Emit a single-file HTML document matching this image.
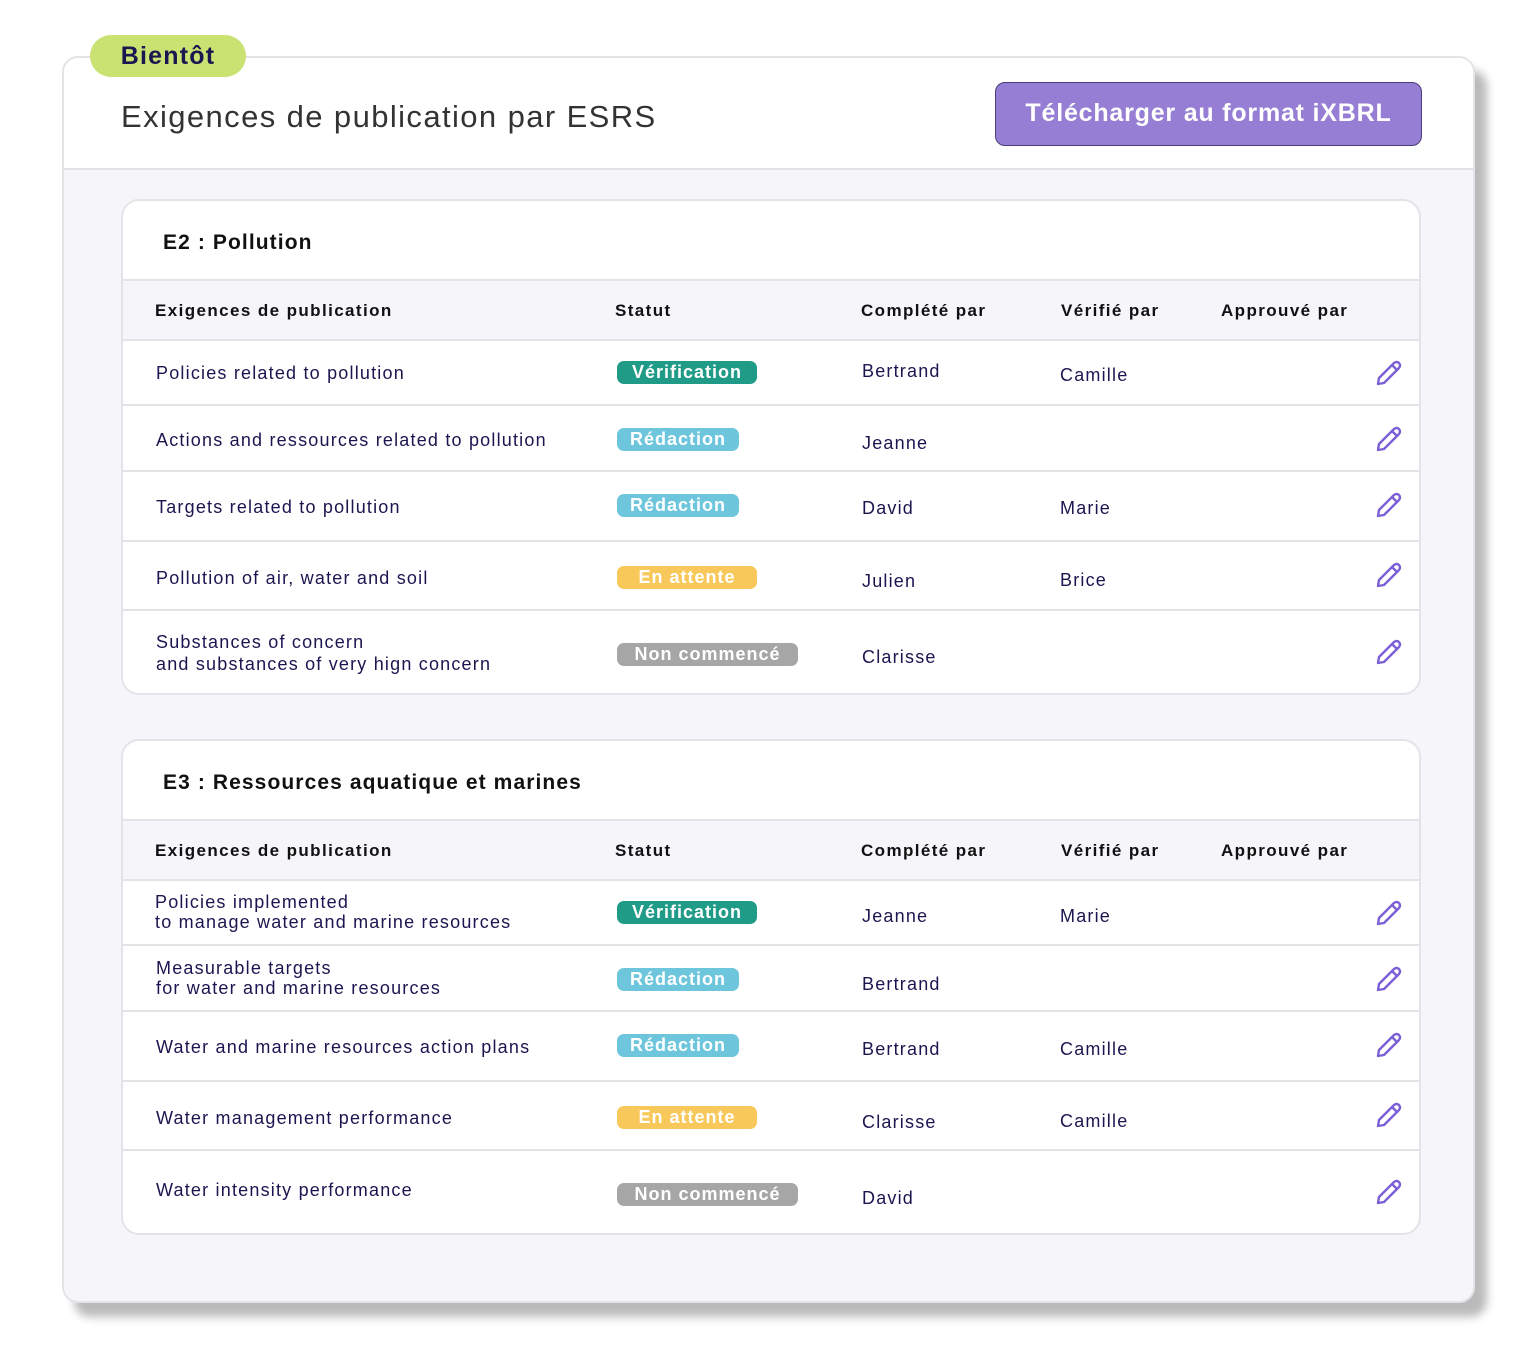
<!DOCTYPE html>
<html><head><meta charset="utf-8">
<style>
*{margin:0;padding:0;box-sizing:border-box}
body{width:1536px;height:1358px;background:#fff;position:relative;font-family:"Liberation Sans",sans-serif;overflow:hidden}
.abs{position:absolute;white-space:nowrap}
#outer{position:absolute;left:62px;top:56px;width:1413px;height:1247px;background:#f5f5fa;border:2px solid #e4e4e8;border-radius:16px;box-shadow:12px 14px 9px rgba(0,0,0,0.27);overflow:hidden}
#head{position:absolute;left:0;top:0;right:0;height:112px;background:#fff;border-bottom:2px solid #e2e2e6}
.card{position:absolute;left:121px;width:1300px;height:496px;background:#fff;border:2px solid #e4e4e8;border-radius:18px;overflow:hidden}
.ttl{position:absolute;left:40px;top:30px;font-size:21px;font-weight:bold;color:#111;letter-spacing:1.1px}
.hrow{position:absolute;left:0;right:0;top:78px;height:62px;background:#f5f5fa;border-top:2px solid #e4e4e8;border-bottom:2px solid #e4e4e8}
.hrow span{position:absolute;top:20px;font-size:17px;font-weight:bold;color:#111;letter-spacing:1.4px}
.sep{position:absolute;left:0;right:0;height:2px;background:#e4e4e8}
.t{position:absolute;font-size:18px;color:#1b1650;line-height:22px;white-space:nowrap;letter-spacing:1.2px}
.b{position:absolute;left:494px;height:23px;border-radius:7px;color:#fff;font-size:18px;font-weight:bold;line-height:23px;text-align:center;letter-spacing:1px}
.v{background:#1f9b87;width:140px}.r{background:#6ec6dc;width:122px}.e{background:#f8c95a;width:140px}.n{background:#a6a6a6;width:181px}
.p{position:absolute;left:1252px;width:28px;height:28px}
</style></head><body>
<div id="outer">
 <div id="head">
  <div class="abs" style="left:57px;top:41px;font-size:31px;color:#333;letter-spacing:1.4px">Exigences de publication par ESRS</div>
  <div class="abs" style="left:931px;top:24px;width:427px;height:64px;background:#957ed3;border:1.5px solid #4a3d7a;border-radius:10px;color:#fff;font-size:25px;font-weight:bold;text-align:center;line-height:61px;letter-spacing:0.8px">Télécharger au format iXBRL</div>
 </div>
</div>
<div class="abs" style="left:90px;top:35px;width:156px;height:42px;background:#c9e271;border-radius:21px;color:#1b1650;font-size:25px;font-weight:bold;text-align:center;line-height:42px;letter-spacing:1.2px">Bientôt</div>

<svg width="0" height="0" style="position:absolute"><defs><g id="pen"><path d="M3 25 L4 19 L19 4 Q21.5 2 24 4 Q26 6.5 24 9 L9 24 Z M17 6 L22 11" fill="none" stroke="#7b5fd6" stroke-width="2.4" stroke-linejoin="round" stroke-linecap="round"/></g></defs></svg>

<!-- Card 1 -->
<div class="card" style="top:199px">
 <div class="ttl">E2 : Pollution</div>
 <div class="hrow"><span style="left:32px">Exigences de publication</span><span style="left:492px">Statut</span><span style="left:738px">Complété par</span><span style="left:938px">Vérifié par</span><span style="left:1098px">Approuvé par</span></div>
 <div class="sep" style="top:203px"></div><div class="sep" style="top:269px"></div><div class="sep" style="top:339px"></div><div class="sep" style="top:408px"></div>

 <div class="t" style="left:33px;top:161px">Policies related to pollution</div>
 <div class="b v" style="top:160px">Vérification</div>
 <div class="t" style="left:739px;top:159px">Bertrand</div><div class="t" style="left:937px;top:163px">Camille</div>
 <svg class="p" style="top:158px" viewBox="0 0 28 28"><use href="#pen"/></svg>

 <div class="t" style="left:33px;top:228px">Actions and ressources related to pollution</div>
 <div class="b r" style="top:227px">Rédaction</div>
 <div class="t" style="left:739px;top:231px">Jeanne</div>
 <svg class="p" style="top:224px" viewBox="0 0 28 28"><use href="#pen"/></svg>

 <div class="t" style="left:33px;top:295px">Targets related to pollution</div>
 <div class="b r" style="top:293px">Rédaction</div>
 <div class="t" style="left:739px;top:296px">David</div><div class="t" style="left:937px;top:296px">Marie</div>
 <svg class="p" style="top:290px" viewBox="0 0 28 28"><use href="#pen"/></svg>

 <div class="t" style="left:33px;top:366px">Pollution of air, water and soil</div>
 <div class="b e" style="top:365px">En attente</div>
 <div class="t" style="left:739px;top:369px">Julien</div><div class="t" style="left:937px;top:368px">Brice</div>
 <svg class="p" style="top:360px" viewBox="0 0 28 28"><use href="#pen"/></svg>

 <div class="t" style="left:33px;top:430px">Substances of concern<br>and substances of very hign concern</div>
 <div class="b n" style="top:442px">Non commencé</div>
 <div class="t" style="left:739px;top:445px">Clarisse</div>
 <svg class="p" style="top:437px" viewBox="0 0 28 28"><use href="#pen"/></svg>
</div>

<!-- Card 2 -->
<div class="card" style="top:739px">
 <div class="ttl">E3 : Ressources aquatique et marines</div>
 <div class="hrow"><span style="left:32px">Exigences de publication</span><span style="left:492px">Statut</span><span style="left:738px">Complété par</span><span style="left:938px">Vérifié par</span><span style="left:1098px">Approuvé par</span></div>
 <div class="sep" style="top:203px"></div><div class="sep" style="top:269px"></div><div class="sep" style="top:339px"></div><div class="sep" style="top:408px"></div>

 <div class="t" style="left:32px;top:151px;line-height:20px">Policies implemented<br>to manage water and marine resources</div>
 <div class="b v" style="top:160px">Vérification</div>
 <div class="t" style="left:739px;top:164px">Jeanne</div><div class="t" style="left:937px;top:164px">Marie</div>
 <svg class="p" style="top:158px" viewBox="0 0 28 28"><use href="#pen"/></svg>

 <div class="t" style="left:33px;top:217px;line-height:20px">Measurable targets<br>for water and marine resources</div>
 <div class="b r" style="top:227px">Rédaction</div>
 <div class="t" style="left:739px;top:232px">Bertrand</div>
 <svg class="p" style="top:224px" viewBox="0 0 28 28"><use href="#pen"/></svg>

 <div class="t" style="left:33px;top:295px">Water and marine resources action plans</div>
 <div class="b r" style="top:293px">Rédaction</div>
 <div class="t" style="left:739px;top:297px">Bertrand</div><div class="t" style="left:937px;top:297px">Camille</div>
 <svg class="p" style="top:290px" viewBox="0 0 28 28"><use href="#pen"/></svg>

 <div class="t" style="left:33px;top:366px">Water management performance</div>
 <div class="b e" style="top:365px">En attente</div>
 <div class="t" style="left:739px;top:370px">Clarisse</div><div class="t" style="left:937px;top:369px">Camille</div>
 <svg class="p" style="top:360px" viewBox="0 0 28 28"><use href="#pen"/></svg>

 <div class="t" style="left:33px;top:438px">Water intensity performance</div>
 <div class="b n" style="top:442px">Non commencé</div>
 <div class="t" style="left:739px;top:446px">David</div>
 <svg class="p" style="top:437px" viewBox="0 0 28 28"><use href="#pen"/></svg>
</div>
</body></html>
